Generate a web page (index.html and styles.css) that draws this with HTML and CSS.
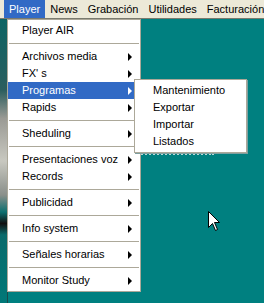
FILE: index.html
```html
<!DOCTYPE html>
<html lang="es">
<head>
  <meta charset="UTF-8">
  <title>Player</title>
  <link rel="stylesheet" href="styles.css">
</head>
<body>
  <div class="menubar">
    <span class="top-item active">Player</span>
    <span class="top-item">News</span>
    <span class="top-item">Grabación</span>
    <span class="top-item">Utilidades</span>
    <span class="top-item">Facturación</span>
  </div>

  <div class="desk">
    <div class="left-strip"></div>
    <div class="desk-dots"></div>
  </div>

  <div class="menu main-menu">
    <div class="item">Player AIR</div>
    <div class="sep"></div>
    <div class="item sub">Archivos media</div>
    <div class="item sub">FX' s</div>
    <div class="item sub selected">Programas</div>
    <div class="item sub">Rapids</div>
    <div class="sep"></div>
    <div class="item sub">Sheduling</div>
    <div class="sep"></div>
    <div class="item sub">Presentaciones voz</div>
    <div class="item sub">Records</div>
    <div class="sep"></div>
    <div class="item sub">Publicidad</div>
    <div class="sep"></div>
    <div class="item sub">Info system</div>
    <div class="sep"></div>
    <div class="item sub">Señales horarias</div>
    <div class="sep"></div>
    <div class="item sub">Monitor Study</div>
  </div>

  <div class="menu sub-menu">
    <div class="item">Mantenimiento</div>
    <div class="item">Exportar</div>
    <div class="item">Importar</div>
    <div class="item">Listados</div>
  </div>

  <svg class="cursor" width="13" height="21" viewBox="0 0 13 21">
    <path d="M0.5 0.5 L0.5 16.5 L4.5 12.5 L7.5 19.5 L9.5 18.5 L6.5 11.5 L11.5 11.5 Z" fill="#fff" stroke="#000" stroke-width="1"/>
  </svg>
</body>
</html>
```

FILE: styles.css
```css
body {
  margin: 0;
  width: 264px;
  height: 303px;
  overflow: hidden;
  background-color: #008080;
  font-family: "Liberation Sans", Arial, sans-serif;
  font-size: 11px;
  color: #000;
  position: relative;
}
.menubar {
  height: 18px;
  display: flex;
  align-items: stretch;
  padding-left: 4px;
  background-color: #ece9d8;
  border-bottom: 1px solid #7a7a6e;
  white-space: nowrap;
}
.top-item {
  display: flex;
  align-items: center;
  padding: 0 5px;
}
.top-item.active {
  background-color: #316ac5;
  color: #fff;
}
.desk {
  display: flex;
  height: 284px;
}
.left-strip {
  width: 7px;
  background: linear-gradient(#0c6464 0%, #2b5e5e 25%, #9a9a94 35%, #c8c8c0 50%, #8a8f8a 62%, #0b6f6f 68%, #101010 72%, #0a6a6a 76%, #007878 100%);
  border-right: 1px solid #1c4a4a;
}
.desk-dots {
  margin: 134px 0 0 126px;
  width: 80px;
  height: 0;
  border-top: 2px dotted #bcd8d8;
}
.menu {
  position: absolute;
  background-color: #fff;
  border: 1px solid #aca899;
  padding: 2px 0;
}
.main-menu {
  left: 7px;
  top: 19px;
  width: 132px;
}
.sub-menu {
  left: 134px;
  top: 79px;
  width: 111px;
  box-shadow: 1px 1px 0 #7f9f9f;
}
.item {
  height: 17px;
  line-height: 17px;
  padding-left: 14px;
  position: relative;
  white-space: nowrap;
}
.sub-menu .item {
  padding-left: 18px;
}
.item.sub::after {
  content: "";
  position: absolute;
  right: 8px;
  top: 5px;
  border-left: 4px solid #000;
  border-top: 4px solid transparent;
  border-bottom: 4px solid transparent;
}
.item.selected {
  background-color: #316ac5;
  color: #fff;
}
.item.selected::after {
  border-left-color: #fff;
}
.sep {
  height: 1px;
  margin: 4px 1px 4px 1px;
  background-color: #aca899;
}
.cursor {
  position: absolute;
  left: 208px;
  top: 211px;
}
```
